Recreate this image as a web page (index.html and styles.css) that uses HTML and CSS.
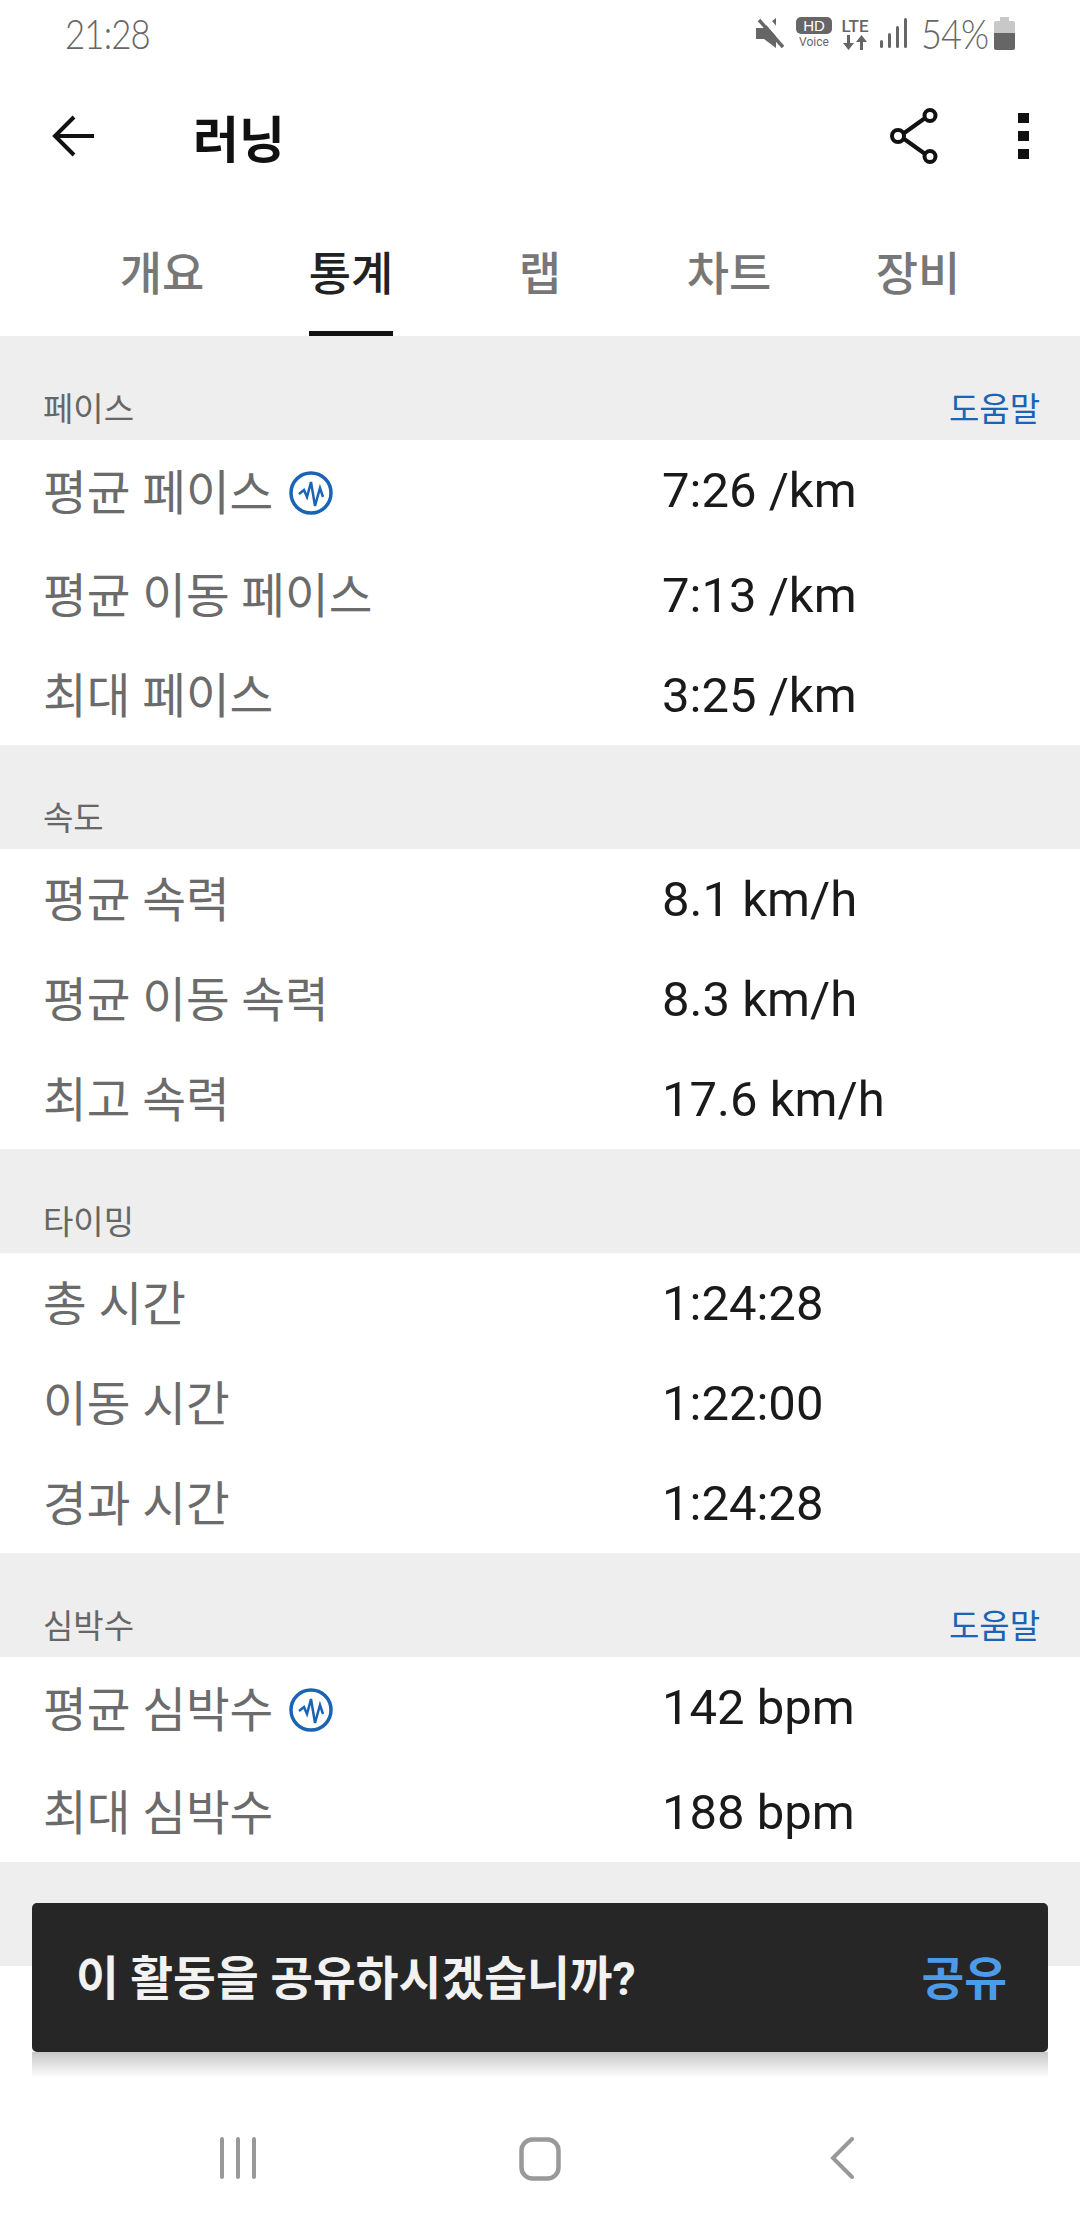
FILE: index.html
```html
<!DOCTYPE html>
<html lang="ko">
<head>
  <meta charset="UTF-8">
  <meta name="viewport" content="width=device-width, initial-scale=1.0">
  <title>러닝</title>
  <link rel="stylesheet" href="styles.css">
</head>
<body>
  <div class="page">

    <!-- status bar -->
    <div class="status">
      <span class="clock">21:28</span>
      <div class="status-icons">
        <svg class="ic-mute" width="28" height="32" viewBox="0 0 28 32">
          <path fill="#666" d="M0 11h7L20 1v30L8 22H0z"/>
          <path stroke="#fff" stroke-width="7" d="M8 0l24 28"/>
          <path stroke="#666" stroke-width="3.4" d="M3 3l24 27"/>
        </svg>
        <div class="hd">
          <span class="hd-pill">HD</span>
          <span class="hd-voice">Voice</span>
        </div>
        <div class="lte">
          <span class="lte-text">LTE</span>
          <svg width="24" height="15" viewBox="0 0 24 15">
            <path fill="#666" d="M4 0h3v8h4l-5.500 7L0 8h4z M17 15h3V7h4L18.500 0 13 7h4z"/>
          </svg>
        </div>
        <svg class="ic-signal" width="27" height="30" viewBox="0 0 27 30">
          <rect x="0" y="22" width="3" height="8" rx="1.500" fill="#666"/>
          <rect x="8" y="15" width="3" height="15" rx="1.500" fill="#666"/>
          <rect x="16" y="8" width="3" height="22" rx="1.500" fill="#666"/>
          <rect x="24" y="0" width="3" height="30" rx="1.500" fill="#666"/>
        </svg>
        <span class="battery-text">54%</span>
        <svg width="21" height="33" viewBox="0 0 21 33">
          <path fill="#c8c8c8" d="M6 0h9v4h4a2 2 0 0 1 2 2v10H0V6a2 2 0 0 1 2-2h4z"/>
          <path fill="#666" d="M0 16h21v15a2 2 0 0 1-2 2H2a2 2 0 0 1-2-2z"/>
        </svg>
      </div>
    </div>

    <!-- app bar -->
    <div class="appbar">
      <svg class="back" width="43" height="42" viewBox="0 0 43 42">
        <path d="M42 21H3M22 2L3 21l19 19" fill="none" stroke="#111" stroke-width="4"/>
      </svg>
      <span class="appbar-title">러닝</span>
      <svg class="share" width="50" height="56" viewBox="0 0 50 56">
        <path d="M11 28L39 8M11 28l28 20" stroke="#111" stroke-width="4" fill="none"/>
        <circle cx="9" cy="28" r="6" fill="#fff" stroke="#111" stroke-width="4"/>
        <circle cx="41" cy="7.500" r="5.500" fill="#fff" stroke="#111" stroke-width="4"/>
        <circle cx="41" cy="48.500" r="5.500" fill="#fff" stroke="#111" stroke-width="4"/>
      </svg>
      <div class="more"><i></i><i></i><i></i></div>
    </div>

    <!-- tabs -->
    <div class="tabs">
      <div class="tab"><span>개요</span></div>
      <div class="tab active"><span>통계</span></div>
      <div class="tab"><span>랩</span></div>
      <div class="tab"><span>차트</span></div>
      <div class="tab"><span>장비</span></div>
    </div>

    <div class="section-head"><span>페이스</span><a class="help">도움말</a></div>
    <div class="rows">
      <div class="row tall">
        <div class="label">평균 페이스
          <svg class="wave" width="44" height="44" viewBox="0 0 44 44">
            <circle cx="22" cy="22" r="20" fill="none" stroke="#1a63b5" stroke-width="3.500"/>
            <path d="M10 23l5-4 3 7 4-15 4 24 5-18 3 9" fill="none" stroke="#1a63b5" stroke-width="2.500"/>
          </svg>
        </div>
        <div class="value">7:26 /km</div>
      </div>
      <div class="row"><div class="label">평균 이동 페이스</div><div class="value">7:13 /km</div></div>
      <div class="row"><div class="label">최대 페이스</div><div class="value">3:25 /km</div></div>
    </div>

    <div class="section-head"><span>속도</span></div>
    <div class="rows">
      <div class="row"><div class="label">평균 속력</div><div class="value">8.1 km/h</div></div>
      <div class="row"><div class="label">평균 이동 속력</div><div class="value">8.3 km/h</div></div>
      <div class="row"><div class="label">최고 속력</div><div class="value">17.6 km/h</div></div>
    </div>

    <div class="section-head"><span>타이밍</span></div>
    <div class="rows">
      <div class="row"><div class="label">총 시간</div><div class="value">1:24:28</div></div>
      <div class="row"><div class="label">이동 시간</div><div class="value">1:22:00</div></div>
      <div class="row"><div class="label">경과 시간</div><div class="value">1:24:28</div></div>
    </div>

    <div class="section-head"><span>심박수</span><a class="help">도움말</a></div>
    <div class="rows">
      <div class="row tall">
        <div class="label">평균 심박수
          <svg class="wave" width="44" height="44" viewBox="0 0 44 44">
            <circle cx="22" cy="22" r="20" fill="none" stroke="#1a63b5" stroke-width="3.500"/>
            <path d="M10 23l5-4 3 7 4-15 4 24 5-18 3 9" fill="none" stroke="#1a63b5" stroke-width="2.500"/>
          </svg>
        </div>
        <div class="value">142 bpm</div>
      </div>
      <div class="row"><div class="label">최대 심박수</div><div class="value">188 bpm</div></div>
    </div>

    <div class="section-head"></div>

    <div class="spacer"></div>

    <!-- bottom nav -->
    <div class="navbar">
      <div class="nav-item">
        <svg width="36" height="42" viewBox="0 0 36 42">
          <path d="M2 2v38M18 2v38M34 2v38" stroke="#999" stroke-width="4" stroke-linecap="round"/>
        </svg>
      </div>
      <div class="nav-item">
        <svg width="42" height="44" viewBox="0 0 42 44">
          <rect x="2.500" y="2.500" width="37" height="39" rx="11" fill="none" stroke="#999" stroke-width="4.500"/>
        </svg>
      </div>
      <div class="nav-item">
        <svg width="24" height="42" viewBox="0 0 24 42">
          <path d="M22 2L3 21l19 19" fill="none" stroke="#999" stroke-width="4" stroke-linecap="round"/>
        </svg>
      </div>
    </div>

    <div class="snackbar">
      <span class="snack-text">이 활동을 공유하시겠습니까?</span>
      <span class="snack-action">공유</span>
    </div>
  </div>
</body>
</html>
```

FILE: styles.css
```css
* {
  box-sizing: border-box;
}
body {
  margin: 0;
  background-color: #fff;
  font-family: Roboto, "Noto Sans CJK KR", sans-serif;
}
.page {
  position: relative;
  width: 1080px;
  height: 2220px;
  overflow: hidden;
  display: flex;
  flex-direction: column;
}

/* status bar */
.status {
  height: 71px;
  display: flex;
  justify-content: space-between;
  align-items: center;
  padding: 0 65px 5px;
  color: #666;
}
.clock {
  font-family: Lato, sans-serif;
  font-size: 41px;
  font-weight: 300;
  letter-spacing: -1px;
  transform: scaleX(0.85);
  transform-origin: left center;
}
.status-icons {
  display: flex;
  align-items: center;
}
.hd {
  width: 36px;
  margin-left: 12px;
  display: flex;
  flex-direction: column;
  align-items: center;
}
.hd-pill {
  width: 36px;
  height: 17px;
  border-radius: 5px;
  background-color: #666;
  color: #fff;
  font-family: "Liberation Sans", sans-serif;
  font-size: 15px;
  line-height: 17px;
  text-align: center;
}
.hd-voice {
  font-family: Roboto, sans-serif;
  font-size: 12px;
  line-height: 16px;
}
.lte {
  width: 32px;
  margin-left: 7px;
  display: flex;
  flex-direction: column;
  align-items: center;
}
.lte-text {
  font-family: Roboto, sans-serif;
  font-size: 17px;
  font-weight: 500;
  line-height: 18px;
}
.ic-signal {
  margin-left: 9px;
}
.battery-text {
  width: 66px;
  font-family: Lato, sans-serif;
  font-size: 41px;
  font-weight: 300;
  letter-spacing: -1px;
  margin-left: 14px;
  margin-right: 7px;
  white-space: nowrap;
  transform: scaleX(0.88);
  transform-origin: left center;
}

/* app bar */
.appbar {
  height: 130px;
  display: flex;
  align-items: center;
  padding: 0 51px 0 52px;
}
.appbar-title {
  margin-left: 98px;
  font-size: 50px;
  font-weight: 700;
  color: #111;
  flex: 1;
}
.share {
  margin-right: 79px;
}
.more {
  width: 11px;
  display: flex;
  flex-direction: column;
  gap: 8px;
}
.more i {
  display: block;
  height: 10px;
  background-color: #111;
}

/* tabs */
.tabs {
  height: 135px;
  display: flex;
  justify-content: center;
}
.tab {
  width: 189px;
  display: flex;
  justify-content: center;
  font-size: 46px;
  font-weight: 500;
  color: #777;
}
.tab span {
  height: 135px;
  line-height: 146px;
}
.tab.active {
  color: #222;
}
.tab.active span {
  border-bottom: 5px solid #111;
}

/* stat sections */
.section-head {
  height: 104px;
  padding: 0 40px 0 43px;
  background-color: #eee;
  display: flex;
  justify-content: space-between;
  align-items: flex-end;
  font-size: 33px;
  line-height: 60px;
  color: #666;
}
.help {
  color: #1a63b5;
}
.row {
  height: 100px;
  display: flex;
  align-items: center;
  padding-left: 43px;
}
.row.tall {
  height: 105px;
}
.label {
  width: 619px;
  display: flex;
  align-items: center;
  padding-bottom: 6px;
  font-size: 47.5px;
  color: #6b6b6b;
  gap: 16px;
}
.wave {
  margin-top: 6px;
}
.value {
  font-size: 49px;
  color: #1a1a1a;
}
.tall .value {
  padding-bottom: 5px;
}

.spacer {
  flex: 1;
}

/* bottom nav */
.navbar {
  height: 136px;
  display: flex;
  justify-content: center;
  padding-top: 53px;
}
.nav-item {
  width: 302px;
  display: flex;
  justify-content: center;
}
.nav-item svg {
  display: block;
}

/* snackbar sits over the list */
.snackbar {
  position: absolute;
  left: 32px;
  top: 1903px;
  width: 1016px;
  height: 149px;
  padding: 0 41px 7px 44px;
  border-radius: 5px;
  background-color: #262626;
  display: flex;
  justify-content: space-between;
  align-items: center;
  font-size: 46.5px;
  font-weight: 700;
}
.snackbar::after {
  content: "";
  position: absolute;
  left: 0;
  right: 0;
  top: 149px;
  height: 26px;
  background: linear-gradient(rgba(0, 0, 0, 0.22), rgba(0, 0, 0, 0));
}
.snack-text {
  color: #f2f2f2;
}
.snack-action {
  color: #4c9be8;
}
```
